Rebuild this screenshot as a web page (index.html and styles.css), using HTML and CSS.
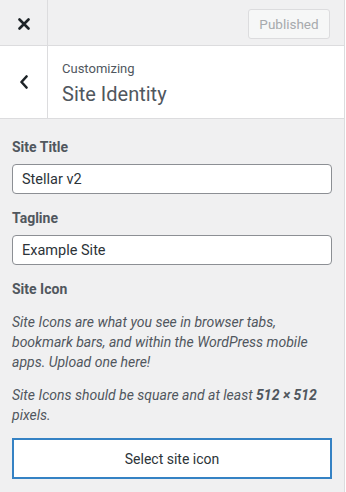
FILE: index.html
```html
<!DOCTYPE html>
<html lang="en">
<head>
  <meta charset="UTF-8" />
  <title>Site Identity</title>
  <link rel="stylesheet" href="styles.css">
</head>
<body>
  <div class="sidebar">
    <div class="header">
      <button class="close-btn" aria-label="Close">
        <svg width="12" height="12" viewBox="0 0 12 12"><path d="M1.5 1.5 L10.5 10.5 M10.5 1.5 L1.5 10.5" stroke="#1d2327" stroke-width="2.6" stroke-linecap="round"/></svg>
      </button>
      <div class="header-actions">
        <button class="publish-btn" disabled>Published</button>
      </div>
    </div>

    <div class="section-head">
      <button class="back-btn" aria-label="Back">
        <svg width="10" height="14" viewBox="0 0 10 14"><path d="M7.5 1.5 L2.5 7 L7.5 12.5" fill="none" stroke="#1d2327" stroke-width="2.6" stroke-linecap="round" stroke-linejoin="round"/></svg>
      </button>
      <div class="section-title">
        <span class="crumb">Customizing</span>
        <h2>Site Identity</h2>
      </div>
    </div>

    <div class="content">
      <div class="control">
        <label class="control-label">Site Title</label>
        <input type="text" class="text-input" value="Stellar v2">
      </div>
      <div class="control">
        <label class="control-label">Tagline</label>
        <input type="text" class="text-input" value="Example Site">
      </div>
      <div class="control icon-control">
        <span class="control-label">Site Icon</span>
        <p class="description">Site Icons are what you see in browser tabs, bookmark bars, and within the WordPress mobile apps. Upload one here!</p>
        <p class="description">Site Icons should be square and at least <strong>512 × 512</strong> pixels.</p>
        <button class="select-btn">Select site icon</button>
      </div>
    </div>
  </div>
</body>
</html>
```

FILE: styles.css
```css
body {
  margin: 0;
  font-family: Roboto, "Noto Sans", sans-serif;
  background-color: #fff;
  color: #50575e;
}
.sidebar {
  width: 344px;
  min-height: 492px;
  background-color: #f0f0f1;
  border-right: 1px solid #dcdcde;
}
button {
  font-family: inherit;
}
.header {
  display: flex;
  height: 45px;
  border-bottom: 1px solid #dcdcde;
}
.close-btn,
.back-btn {
  width: 48px;
  padding: 0;
  border: 0;
  border-right: 1px solid #dcdcde;
  background: transparent;
  display: flex;
  align-items: center;
  justify-content: center;
}
.close-btn svg {
  margin-left: 1px;
  margin-top: 2px;
}
.header-actions {
  flex: 1;
  display: flex;
  justify-content: flex-end;
  align-items: center;
  padding-right: 14px;
  padding-top: 2px;
}
.publish-btn {
  width: 82px;
  height: 30px;
  font-size: 13.5px;
  color: #a7aaad;
  background-color: #f6f7f7;
  border: 1px solid #dcdcde;
  border-radius: 3px;
}
.section-head {
  display: flex;
  height: 72px;
  background-color: #fff;
  border-bottom: 1px solid #dcdcde;
}
.section-title {
  display: flex;
  flex-direction: column;
  justify-content: center;
  padding-left: 14px;
  padding-top: 4px;
}
.crumb {
  font-size: 13px;
  line-height: 20px;
}
.section-title h2 {
  margin: 0;
  font-size: 20px;
  font-weight: 400;
  line-height: 30px;
  color: #50575e;
}
.content {
  padding: 18px 12px 12px;
}
.control {
  margin-bottom: 14px;
}
.control-label {
  display: block;
  font-size: 14px;
  font-weight: 700;
  line-height: 21px;
  margin-bottom: 6px;
}
.text-input {
  display: block;
  box-sizing: border-box;
  width: 100%;
  height: 30px;
  padding: 0 9px;
  font-family: inherit;
  font-size: 14.5px;
  color: #2c3338;
  background-color: #fff;
  border: 1px solid #8c8f94;
  border-radius: 4px;
}
.icon-control .control-label {
  margin-top: 0;
  margin-bottom: 12px;
}
.description {
  margin: 0 0 13px;
  font-size: 14px;
  font-style: italic;
  line-height: 20px;
}
.description strong {
  font-weight: 700;
}
.select-btn {
  display: block;
  width: 100%;
  height: 41px;
  margin-top: 11px;
  font-size: 14px;
  color: #2c3338;
  background-color: #fff;
  border: 2px solid #3582c4;
  border-radius: 0;
}
```
